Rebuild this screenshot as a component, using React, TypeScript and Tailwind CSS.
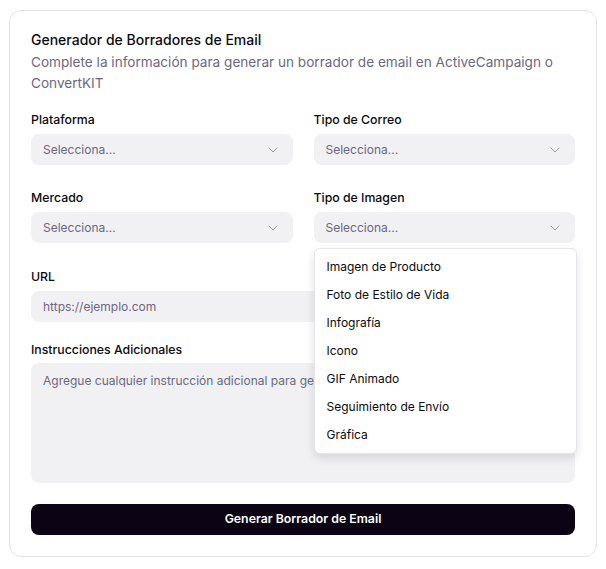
import { ChevronDown } from 'lucide-react';

const imageTypes = [
  'Imagen de Producto',
  'Foto de Estilo de Vida',
  'Infografía',
  'Icono',
  'GIF Animado',
  'Seguimiento de Envío',
  'Gráfica',
];

function Label({ children }: { children: React.ReactNode }) {
  return <div className="text-[12.3px] leading-5 font-medium text-[#0a0a0f]">{children}</div>;
}

function Select({ open }: { open?: boolean }) {
  return (
    <div className="relative">
      <div className="flex h-[31px] items-center justify-between rounded-lg bg-[#f1f1f4] px-3 text-[12px] text-[#6b6880]">
        <span>Selecciona...</span>
        <ChevronDown className="h-4 w-4 text-[#9a98a8]" strokeWidth={1.5} />
      </div>
      {open && (
        <div className="absolute left-0 top-[36px] z-10 w-[263px] rounded-md border border-[#e6e6ea] bg-white py-1 shadow-[0_4px_10px_rgba(0,0,0,0.12)]">
          {imageTypes.map((t) => (
            <div key={t} className="flex h-[28px] items-center px-3 text-[12px] text-[#0a0a0f]">
              {t}
            </div>
          ))}
        </div>
      )}
    </div>
  );
}

export default function App() {
  return (
    <div className="bg-white px-[9px] pt-[10px] pb-3" style={{ fontFamily: 'Inter, "Noto Sans", sans-serif' }}>
      <div className="rounded-xl border border-[#e4e4e7] bg-white px-[21px] pt-[18px] pb-[21px]">
        <h1 className="text-[14px] leading-[22px] font-medium text-[#0a0a0f]">Generador de Borradores de Email</h1>
        <p className="mt-[1px] text-[13.6px] leading-[21px] text-[#6b6880]">
          Complete la información para generar un borrador de email en ActiveCampaign o ConvertKIT
        </p>

        <div className="mt-4 grid grid-cols-2 gap-x-[21px] gap-y-[23px]">
          <div className="flex flex-col gap-1">
            <Label>Plataforma</Label>
            <Select />
          </div>
          <div className="flex flex-col gap-1">
            <Label>Tipo de Correo</Label>
            <Select />
          </div>
          <div className="flex flex-col gap-1">
            <Label>Mercado</Label>
            <Select />
          </div>
          <div className="relative z-10 flex flex-col gap-1">
            <Label>Tipo de Imagen</Label>
            <Select open />
          </div>
        </div>

        <div className="mt-6 flex flex-col gap-1">
          <Label>URL</Label>
          <div className="flex h-[31px] items-center rounded-lg bg-[#f1f1f4] px-3 text-[12px] text-[#6b6880]">
            https://ejemplo.com
          </div>
        </div>

        <div className="mt-[18px] flex flex-col gap-[3px]">
          <Label>Instrucciones Adicionales</Label>
          <div className="h-[120px] overflow-hidden whitespace-nowrap rounded-lg bg-[#f1f1f4] px-3 py-2 text-[12px] leading-5 text-[#6b6880]">
            Agregue cualquier instrucción adicional para generar el borrador de email
          </div>
        </div>

        <button className="mt-[21px] flex h-[31px] w-full items-center justify-center rounded-lg bg-[#0c0414] text-[12.3px] font-semibold text-white">
          Generar Borrador de Email
        </button>
      </div>
    </div>
  );
}
